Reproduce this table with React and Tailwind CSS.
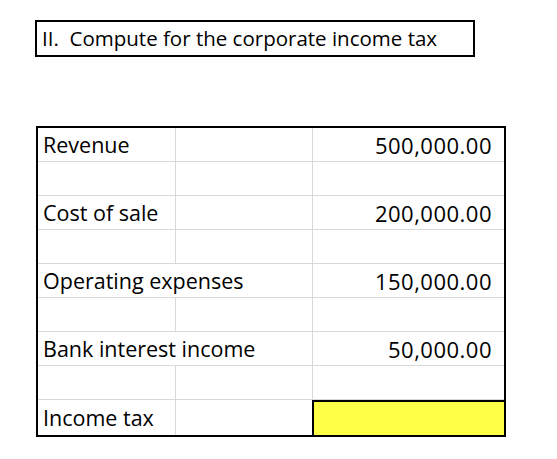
import React from 'react';

const rows = [
  { label: 'Revenue', amount: '500,000.00' },
  { label: '', amount: '' },
  { label: 'Cost of sale', amount: '200,000.00' },
  { label: '', amount: '' },
  { label: 'Operating expenses', amount: '150,000.00', wide: true },
  { label: '', amount: '' },
  { label: 'Bank interest income', amount: '50,000.00', wide: true },
  { label: '', amount: '' },
];

const App = () => {
  return (
    <div className="w-[557px] h-[459px] bg-white pt-[20px] pl-[35px] text-black text-[21.5px] font-medium font-['Open_Sans',sans-serif]">
      <div className="w-[440px] h-[37px] border-2 border-black flex items-center pl-[5px] leading-none whitespace-nowrap text-[20.5px]">
        II.&nbsp; Compute for the corporate income tax
      </div>

      <div className="mt-[69px] ml-[1px] w-[470px] border-2 border-black grid grid-cols-[138px_137px_1fr] leading-none">
        {rows.map((row, i) => (
          <React.Fragment key={i}>
            {row.wide ? (
              <div className="col-span-2 h-[34px] border-r border-b border-[#d9d9d9] pl-[5px] flex items-center whitespace-nowrap">{row.label}</div>
            ) : (
              <>
                <div className="h-[34px] border-r border-b border-[#d9d9d9] pl-[5px] flex items-center whitespace-nowrap">{row.label}</div>
                <div className="h-[34px] border-r border-b border-[#d9d9d9]"></div>
              </>
            )}
            <div className="h-[34px] border-b border-[#d9d9d9] pr-[12px] flex items-center justify-end text-[22px] tracking-[0.5px]">{row.amount}</div>
          </React.Fragment>
        ))}
        <div className="h-[35px] border-r border-[#d9d9d9] pl-[5px] flex items-center">Income tax</div>
        <div className="h-[35px]"></div>
        <div className="h-[35px] bg-[#ffff47] border-l-2 border-t-2 border-black -ml-[1px]"></div>
      </div>
    </div>
  );
};

export default App;
